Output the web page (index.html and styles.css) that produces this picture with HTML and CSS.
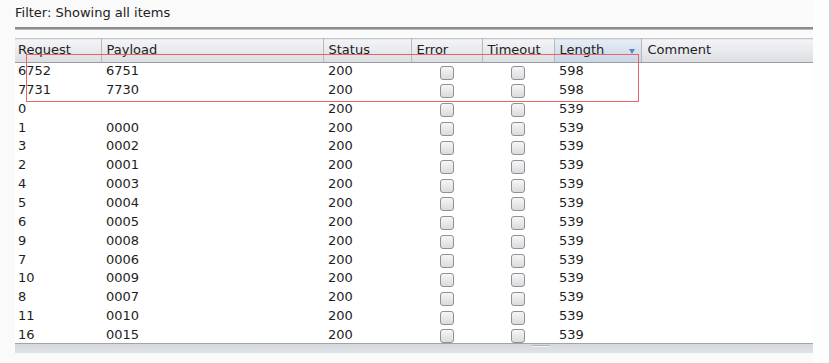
FILE: index.html
```html
<!DOCTYPE html>
<html lang="en">
<head>
  <meta charset="UTF-8" />
  <title>Intruder results</title>
  <link rel="stylesheet" href="styles.css">
</head>
<body>
  <div class="panel">
    <div class="filter">Filter: Showing all items</div>

    <div class="results">
      <table class="grid">
        <colgroup>
          <col class="c-req"><col class="c-pay"><col class="c-status"><col class="c-err">
          <col class="c-timeout"><col class="c-len"><col class="c-comment">
        </colgroup>
        <thead>
          <tr>
            <th>Request</th>
            <th>Payload</th>
            <th>Status</th>
            <th>Error</th>
            <th>Timeout</th>
            <th class="sorted">Length <span class="arrow"></span></th>
            <th>Comment</th>
          </tr>
        </thead>
        <tbody>
          <tr><td>6752</td><td>6751</td><td>200</td><td class="chk"><span class="box"></span></td><td class="chk"><span class="box"></span></td><td>598</td><td></td></tr>
          <tr><td>7731</td><td>7730</td><td>200</td><td class="chk"><span class="box"></span></td><td class="chk"><span class="box"></span></td><td>598</td><td></td></tr>
          <tr><td>0</td><td></td><td>200</td><td class="chk"><span class="box"></span></td><td class="chk"><span class="box"></span></td><td>539</td><td></td></tr>
          <tr><td>1</td><td>0000</td><td>200</td><td class="chk"><span class="box"></span></td><td class="chk"><span class="box"></span></td><td>539</td><td></td></tr>
          <tr><td>3</td><td>0002</td><td>200</td><td class="chk"><span class="box"></span></td><td class="chk"><span class="box"></span></td><td>539</td><td></td></tr>
          <tr><td>2</td><td>0001</td><td>200</td><td class="chk"><span class="box"></span></td><td class="chk"><span class="box"></span></td><td>539</td><td></td></tr>
          <tr><td>4</td><td>0003</td><td>200</td><td class="chk"><span class="box"></span></td><td class="chk"><span class="box"></span></td><td>539</td><td></td></tr>
          <tr><td>5</td><td>0004</td><td>200</td><td class="chk"><span class="box"></span></td><td class="chk"><span class="box"></span></td><td>539</td><td></td></tr>
          <tr><td>6</td><td>0005</td><td>200</td><td class="chk"><span class="box"></span></td><td class="chk"><span class="box"></span></td><td>539</td><td></td></tr>
          <tr><td>9</td><td>0008</td><td>200</td><td class="chk"><span class="box"></span></td><td class="chk"><span class="box"></span></td><td>539</td><td></td></tr>
          <tr><td>7</td><td>0006</td><td>200</td><td class="chk"><span class="box"></span></td><td class="chk"><span class="box"></span></td><td>539</td><td></td></tr>
          <tr><td>10</td><td>0009</td><td>200</td><td class="chk"><span class="box"></span></td><td class="chk"><span class="box"></span></td><td>539</td><td></td></tr>
          <tr><td>8</td><td>0007</td><td>200</td><td class="chk"><span class="box"></span></td><td class="chk"><span class="box"></span></td><td>539</td><td></td></tr>
          <tr><td>11</td><td>0010</td><td>200</td><td class="chk"><span class="box"></span></td><td class="chk"><span class="box"></span></td><td>539</td><td></td></tr>
          <tr><td>16</td><td>0015</td><td>200</td><td class="chk"><span class="box"></span></td><td class="chk"><span class="box"></span></td><td>539</td><td></td></tr>
        </tbody>
      </table>
      <div class="highlight"></div>
    </div>

    <div class="hscroll"><span class="thumb"></span></div>
  </div>
  <div class="edge"></div>
</body>
</html>
```

FILE: styles.css
```css
* { box-sizing: border-box; }
body {
  margin: 0;
  background: #fdfdfd;
  font-family: 'DejaVu Sans', 'Liberation Sans', sans-serif;
  font-size: 13px;
  color: #1e1e1e;
  display: flex;
  height: 363px;
  overflow: hidden;
}
.panel {
  width: 813px;
  height: 363px;
  background: #fafafa;
  padding-left: 15px;
}
.edge {
  width: 2px;
  height: 363px;
  margin-left: 16px;
  background: #d4d4d4;
}
.filter {
  height: 30px;
  padding-top: 5px;
  border-bottom: 1px solid #b8b8b8;
  box-shadow: inset 0 -2px 0 #8c8c8c;
  color: #222;
}
.results {
  position: relative;
  margin-top: 8px;
  height: 306px;
  overflow: hidden;
  background: #fff;
  border-bottom: 1px solid #a2a4a8;
}
.grid {
  border-collapse: collapse;
  table-layout: fixed;
  width: 798px;
}
.c-req { width: 86px; }
.c-pay { width: 222px; }
.c-status { width: 88px; }
.c-err { width: 71px; }
.c-timeout { width: 72px; }
.c-len { width: 87px; }
.c-comment { width: 172px; }
.grid th {
  height: 24px;
  padding: 3px 0 0 5px;
  vertical-align: top;
  text-align: left;
  font-weight: normal;
  color: #222;
  white-space: nowrap;
  background: linear-gradient(#f3f4f6, #dcdee3);
  border-top: 1px solid #c4c6ca;
  border-bottom: 1px solid #9a9ca0;
  border-right: 1px solid #b6b8bc;
}
.grid th:first-child { padding-left: 3px; }
.grid th:last-child { border-right: none; padding-left: 6px; }
.grid th.sorted {
  position: relative;
  background: linear-gradient(#e6edf5, #c8d6e5);
}
.arrow {
  position: absolute;
  right: 6px;
  top: 10px;
  border-left: 3px solid transparent;
  border-right: 3px solid transparent;
  border-top: 5px solid #5a87bf;
}
.grid td {
  height: 18.86px;
  padding: 0 0 2px 5px;
  white-space: nowrap;
  line-height: 16px;
}
.grid td:first-child { padding-left: 3px; }
.grid td.chk {
  padding: 0;
  text-align: center;
}
.box {
  display: inline-block;
  width: 14px;
  height: 14px;
  vertical-align: middle;
  border: 1px solid #8e9196;
  border-radius: 3px;
  background: linear-gradient(#f6f6f6, #dadbdd);
}
.highlight {
  position: absolute;
  left: 11px;
  top: 16px;
  width: 613px;
  height: 48px;
  border: 1px solid #e86464;
}
.hscroll {
  position: relative;
  height: 9px;
  background: linear-gradient(#d4d7dc, #e0e2e6);
}
.thumb {
  position: absolute;
  left: 517px;
  top: 1px;
  width: 18px;
  height: 2px;
  background: #f2f3f5;
  border-top: 1px solid #b0b2b6;
}
```
